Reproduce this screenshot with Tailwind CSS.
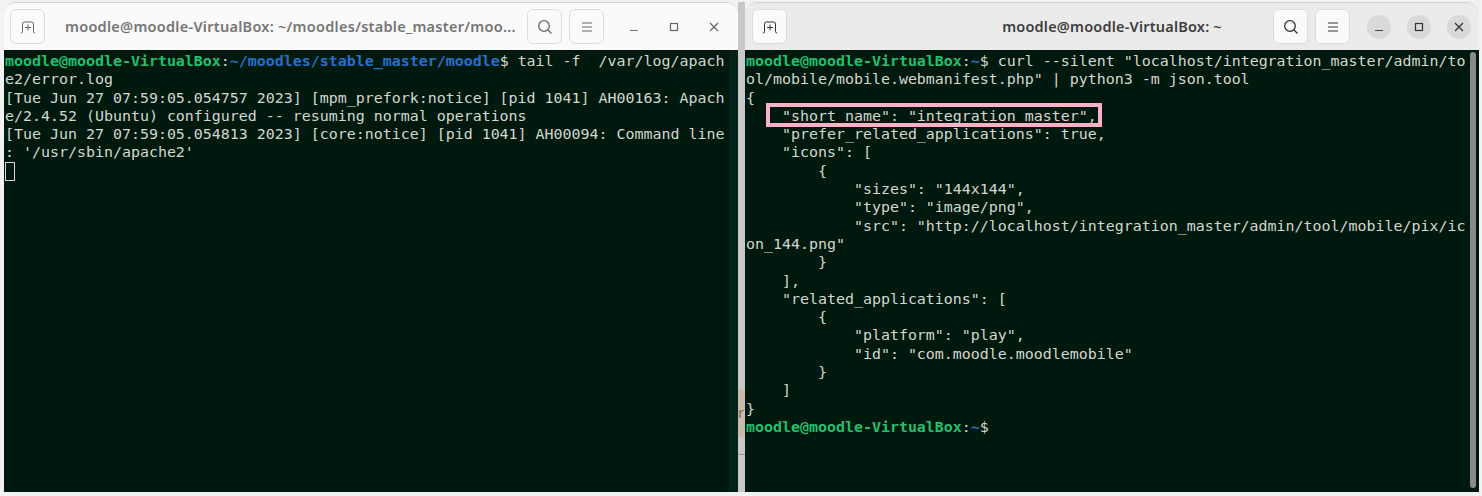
<!DOCTYPE html>
<html lang="en">
<head>
<meta charset="UTF-8">
<title>Terminals</title>
<script src="https://cdn.jsdelivr.net/npm/@tailwindcss/browser@4"></script>
</head>
<body class="h-[496px] w-[1482px] overflow-hidden bg-[#f2f2f2] font-['Noto_Sans']">
<div class="flex h-[492px] pt-[2px] pl-[4px]">

  <!-- left window -->
  <div class="flex h-[490px] w-[734px] flex-col overflow-hidden rounded-t-[12px] border-t border-[#d4d4d4]">
    <div class="flex h-[47px] shrink-0 items-center bg-[#fafafa] pl-[6px] pr-[9px]">
      <button class="flex h-[35px] w-[35px] items-center justify-center rounded-[6px] border border-[#dcdcdc] bg-[#fafafa]">
        <svg width="16" height="16" viewBox="0 0 16 16" fill="none" stroke="#666" stroke-width="1"><path d="M1 14q1.5 0 1.5-1.5V5q0-2 2-2h7q2 0 2 2v7.5q0 1.5 1.5 1.5"/><path d="M8 5.5v6M5 8.500h6"/></svg>
      </button>
      <div class="ml-[20px] w-[444px] whitespace-nowrap text-[14.5px] font-semibold tracking-[0.27px] text-[#757575]">moodle@moodle-VirtualBox: ~/moodles/stable_master/moo...</div>
      <button class="ml-[18px] flex h-[35px] w-[35px] items-center justify-center rounded-[6px] border border-[#dcdcdc]">
        <svg width="16" height="16" viewBox="0 0 16 16" fill="none" stroke="#666" stroke-width="1.3"><circle cx="7" cy="7" r="5.3"/><path d="M11 11l3.500 3.500"/></svg>
      </button>
      <button class="ml-[7px] flex h-[35px] w-[35px] items-center justify-center rounded-[6px] border border-[#dcdcdc]">
        <svg width="12" height="12" viewBox="0 0 12 12" stroke="#666" stroke-width="1.2"><path d="M1 2h10M1 6h10M1 10h10"/></svg>
      </button>
      <div class="ml-[18px] flex h-[24px] w-[24px] items-center justify-center"><svg width="10" height="10" viewBox="0 0 10 10" stroke="#777" stroke-width="1.2"><path d="M1 8.500h8"/></svg></div>
      <div class="ml-[16px] flex h-[24px] w-[24px] items-center justify-center"><svg width="10" height="10" viewBox="0 0 10 10" fill="none" stroke="#666" stroke-width="1.2"><rect x="1.500" y="1.500" width="7" height="7"/></svg></div>
      <div class="ml-[16px] flex h-[24px] w-[24px] items-center justify-center"><svg width="10" height="10" viewBox="0 0 10 10" stroke="#666" stroke-width="1.2"><path d="M1 1l8 8M9 1l-8 8"/></svg></div>
    </div>
    <div class="flex min-h-0 flex-1 bg-[#00190e]">
      <pre class="min-w-0 flex-1 pt-[2px] pl-[1px] font-['DejaVu_Sans_Mono'] text-[14.95px] leading-[18.3px] text-[#d3d7cf]"><span class="font-bold text-[#23bf6d]">moodle@moodle-VirtualBox</span>:<span class="font-bold text-[#2770c9]">~/moodles/stable_master/moodle</span>$ tail -f  /var/log/apach
e2/error.log
[Tue Jun 27 07:59:05.054757 2023] [mpm_prefork:notice] [pid 1041] AH00163: Apach
e/2.4.52 (Ubuntu) configured -- resuming normal operations
[Tue Jun 27 07:59:05.054813 2023] [core:notice] [pid 1041] AH00094: Command line
: '/usr/sbin/apache2'
<span class="inline-block h-[19px] w-[10px] border border-[#d3d7cf] align-top"></span></pre>
      <div class="w-[9px] shrink-0 bg-[#03231a]"></div>
    </div>
  </div>

  <!-- desktop strip between the windows -->
  <div class="flex h-[490px] w-[7px] shrink-0 flex-col">
    <div class="h-[387px] bg-[#c8c8c8]"></div>
    <div class="h-[48px] overflow-hidden bg-[#c9baa9] text-[14px] leading-[48px] text-[#7a6a58]">r</div>
    <div class="h-[17px] bg-[#c8c8c8]"></div>
    <div class="h-[1px] bg-[#9c9c9c]"></div>
    <div class="min-h-0 flex-1 bg-[#c8c8c8]"></div>
  </div>

  <!-- right window -->
  <div class="relative flex h-[490px] w-[734px] flex-col overflow-hidden rounded-t-[12px] border-t border-[#d4d4d4]">
    <div class="flex h-[47px] shrink-0 items-center bg-[#ebebeb] pl-[7px] pr-[8px]">
      <button class="flex h-[35px] w-[35px] items-center justify-center rounded-[6px] border border-[#dcdcdc] bg-[#fafafa]">
        <svg width="16" height="16" viewBox="0 0 16 16" fill="none" stroke="#333" stroke-width="1"><path d="M1 14q1.5 0 1.5-1.5V5q0-2 2-2h7q2 0 2 2v7.5q0 1.5 1.5 1.5"/><path d="M8 5.500v6M5 8.500h6"/></svg>
      </button>
      <div class="flex-1 pl-[164px] text-center text-[14.5px] font-semibold tracking-[0.2px] text-[#3d3d3d]">moodle@moodle-VirtualBox: ~</div>
      <button class="flex h-[35px] w-[35px] items-center justify-center rounded-[6px] border border-[#dcdcdc] bg-[#fafafa]">
        <svg width="16" height="16" viewBox="0 0 16 16" fill="none" stroke="#333" stroke-width="1.3"><circle cx="7" cy="7" r="5.3"/><path d="M11 11l3.500 3.500"/></svg>
      </button>
      <button class="ml-[7px] flex h-[35px] w-[35px] items-center justify-center rounded-[6px] border border-[#dcdcdc] bg-[#fafafa]">
        <svg width="12" height="12" viewBox="0 0 12 12" stroke="#333" stroke-width="1.2"><path d="M1 2h10M1 6h10M1 10h10"/></svg>
      </button>
      <div class="ml-[17px] flex h-[24px] w-[24px] items-center justify-center rounded-full bg-[#d9d9d9]"><svg width="10" height="10" viewBox="0 0 10 10" stroke="#444" stroke-width="1.2"><path d="M1 8.500h8"/></svg></div>
      <div class="ml-[16px] flex h-[24px] w-[24px] items-center justify-center rounded-full bg-[#d9d9d9]"><svg width="10" height="10" viewBox="0 0 10 10" fill="none" stroke="#333" stroke-width="1.2"><rect x="1.500" y="1.500" width="7" height="7"/></svg></div>
      <div class="ml-[16px] flex h-[24px] w-[24px] items-center justify-center rounded-full bg-[#d9d9d9]"><svg width="10" height="10" viewBox="0 0 10 10" stroke="#333" stroke-width="1.2"><path d="M1 1l8 8M9 1l-8 8"/></svg></div>
    </div>
    <div class="relative flex min-h-0 flex-1 bg-[#00190e]">
      <pre class="relative z-10 min-w-0 flex-1 pt-[2px] pl-[1px] font-['DejaVu_Sans_Mono'] text-[14.95px] leading-[18.3px] text-[#d3d7cf]"><span class="font-bold text-[#23bf6d]">moodle@moodle-VirtualBox</span>:<span class="font-bold text-[#2770c9]">~</span>$ curl --silent "localhost/integration_master/admin/to
ol/mobile/mobile.webmanifest.php" | python3 -m json.tool
{
    "short_name": "integration_master",
    "prefer_related_applications": true,
    "icons": [
        {
            "sizes": "144x144",
            "type": "image/png",
            "src": "http://localhost/integration_master/admin/tool/mobile/pix/ic
on_144.png"
        }
    ],
    "related_applications": [
        {
            "platform": "play",
            "id": "com.moodle.moodlemobile"
        }
    ]
}
<span class="font-bold text-[#23bf6d]">moodle@moodle-VirtualBox</span>:<span class="font-bold text-[#2770c9]">~</span>$</pre>
      <div class="absolute top-[2px] right-[3px] h-[436px] w-[6px] rounded-full bg-[#8a8a8a]"></div>
      <div class="absolute top-[53px] left-[21px] h-[24px] w-[336px] border-[4px] border-[#fdb1c9]"></div>
    </div>
  </div>
</div>
</body>
</html>
